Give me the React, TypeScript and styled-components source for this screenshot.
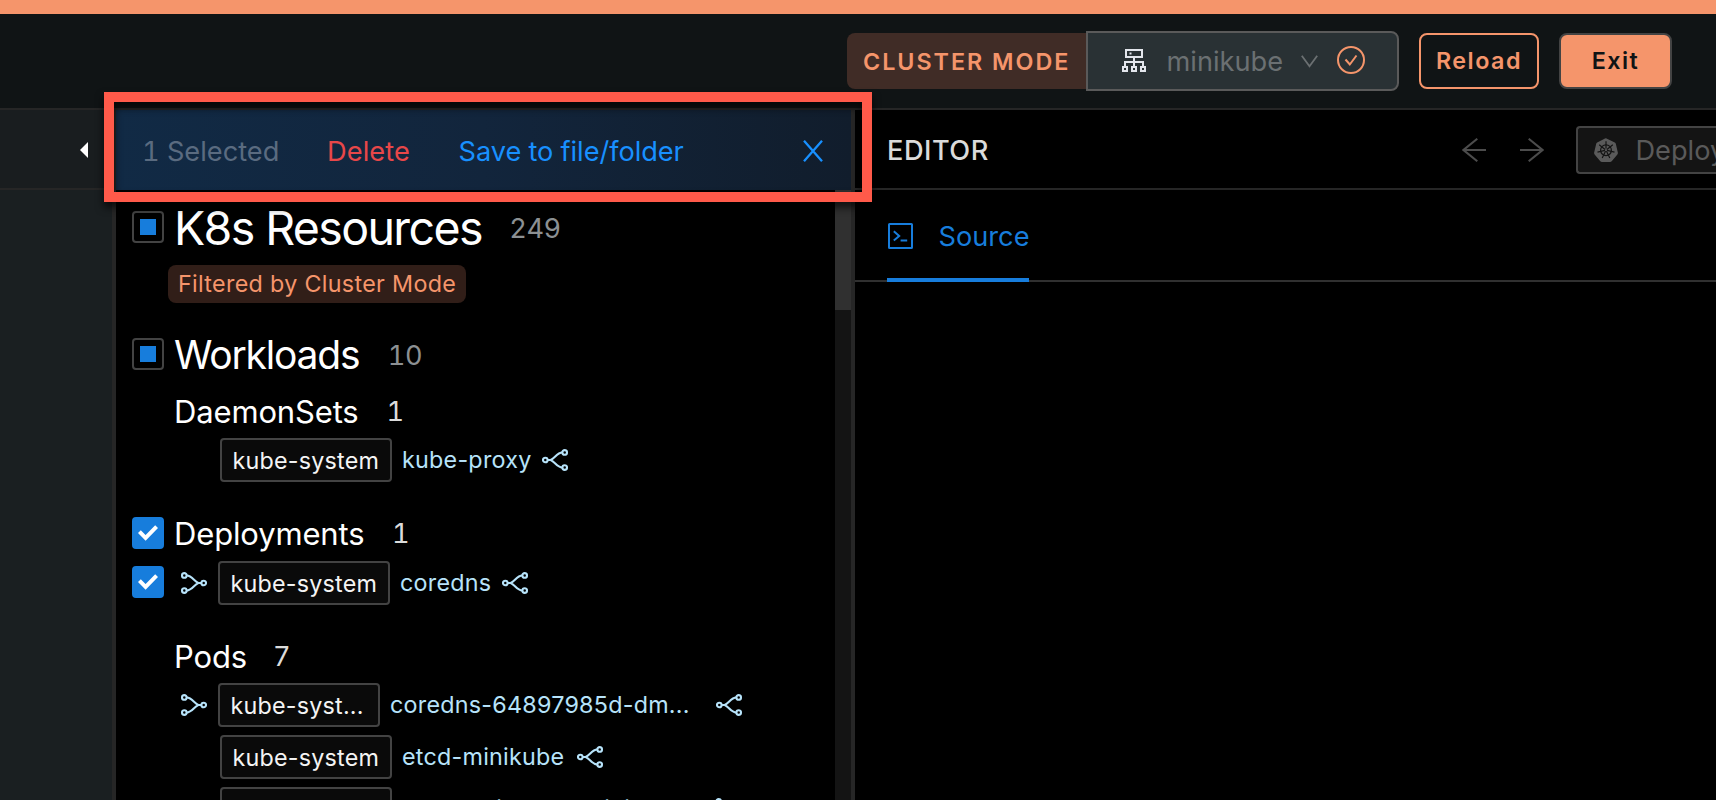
import React from "react";
import styled, { createGlobalStyle } from "styled-components";

const Global = createGlobalStyle`
  *, *::before, *::after { box-sizing: border-box; }
  html, body { margin: 0; background: #000; overflow: hidden; }
  body {
    font-family: Inter, "Liberation Sans", sans-serif;
    font-size: 27.2px;
    color: #dbdbdb;
  }
  svg { flex: none; }
`;

const Page = styled.div`
  position: relative;
  display: flex;
  flex-direction: column;
  width: 1716px;
  height: 800px;
  overflow: hidden;
  background: #000;
`;

const Accent = styled.div`
  flex: none;
  height: 14px;
  background: #f5956b;
`;

const Header = styled.header`
  flex: none;
  display: flex;
  align-items: center;
  justify-content: flex-end;
  height: 96px;
  padding-right: 44px;
  background: #101415;
  border-bottom: 2px solid #262626;
`;

const ModeLabel = styled.div`
  width: 239px;
  height: 56px;
  padding-left: 16px;
  border-radius: 8px 0 0 8px;
  background: #402c26;
  color: #f5956b;
  font-size: 23.3px;
  font-weight: 600;
  line-height: 57px;
  letter-spacing: 1.98px;
  white-space: nowrap;
`;

const ClusterSelect = styled.div`
  display: flex;
  align-items: center;
  width: 313px;
  height: 60px;
  padding-left: 34px;
  border: 2px solid #5a5a5a;
  border-radius: 0 8px 8px 0;
  background: #293134;
  color: #6b7072;
`;

const ClusterName = styled.span`
  margin: 1px 0 0 20.5px;
  width: 134.5px;
  line-height: 56px;
`;

const StatusIcon = styled.span`
  display: flex;
  margin: -2px 0 0 19px;
`;

const Button = styled.button<{ $solid?: boolean; $width: number; $gap: number }>`
  width: ${(p) => p.$width}px;
  height: 56px;
  margin-left: ${(p) => p.$gap}px;
  padding: 0;
  border: 2px solid ${(p) => (p.$solid ? "#434343" : "#f5956b")};
  border-radius: 8px;
  background: ${(p) => (p.$solid ? "#f5956b" : "#101415")};
  color: ${(p) => (p.$solid ? "#101415" : "#f5956b")};
  font: 600 23.3px/52px Inter, sans-serif;
  letter-spacing: 1.5px;
  padding-bottom: ${(p) => (p.$solid ? 0 : 2)}px;
`;

const Body = styled.div`
  flex: 1;
  display: flex;
  min-height: 0;
`;

const Sidebar = styled.aside`
  width: 116px;
  background: #1a1f21;
  border-right: 4px solid #262626;
`;

const SidebarHead = styled.div`
  display: flex;
  align-items: center;
  justify-content: flex-end;
  height: 80px;
  padding: 2px 24px 0 0;
  background: #191d1f;
  border-bottom: 2px solid #262626;
`;

const Navigator = styled.section`
  display: flex;
  flex-direction: column;
  width: 739px;
  border-right: 4px solid #262626;
`;

const SelectionBar = styled.div`
  flex: none;
  display: flex;
  align-items: center;
  height: 80px;
  padding: 3px 28px 0 26px;
  background: linear-gradient(90deg, #112a45 0%, #12253c 50%, #111d2c 100%);
  line-height: 36px;
  white-space: nowrap;
`;

const BarText = styled.span<{ $color: string; $width?: number; $spacing?: number }>`
  color: ${(p) => p.$color};
  width: ${(p) => (p.$width ? `${p.$width}px` : "auto")};
  letter-spacing: ${(p) => p.$spacing ?? 0}px;
  font-variant-numeric: tabular-nums;
`;

const CloseSlot = styled.span`
  display: flex;
  margin: -2px 0 0 auto;
`;

const TreeArea = styled.div`
  flex: 1;
  display: flex;
  min-height: 0;
`;

const Tree = styled.div`
  flex: 1;
  min-width: 0;
  padding-left: 16px;
  overflow: hidden;
`;

const Scrollbar = styled.div`
  width: 16px;
  background: #141414;
`;

const Thumb = styled.div`
  height: 120px;
  background: #303030;
`;

const Row = styled.div<{ $top: number; $height: number }>`
  display: flex;
  align-items: center;
  height: ${(p) => p.$height}px;
  margin-top: ${(p) => p.$top}px;
  white-space: nowrap;
`;

const CheckSlot = styled.span<{ $raise?: boolean }>`
  flex: none;
  width: 42px;
  height: 32px;
  margin-top: ${(p) => (p.$raise ? -2 : 0)}px;
`;

const Box = styled.span<{ $full?: boolean }>`
  display: flex;
  align-items: center;
  justify-content: center;
  width: 32px;
  height: 32px;
  border: 2px solid ${(p) => (p.$full ? "#177ddc" : "#434343")};
  border-radius: 4px;
  background: ${(p) => (p.$full ? "#177ddc" : "transparent")};
`;

const PartialMark = styled.span`
  width: 16px;
  height: 16px;
  background: #177ddc;
`;

const Title = styled.span<{ $size: number; $spacing?: number; $y?: number }>`
  color: #fff;
  font-size: ${(p) => p.$size}px;
  line-height: 1;
  letter-spacing: ${(p) => p.$spacing ?? -0.15}px;
  margin-top: ${(p) => p.$y ?? 0}px;
`;

const Count = styled.span<{ $bright?: boolean; $gap: number; $y?: number }>`
  margin-left: ${(p) => p.$gap}px;
  margin-top: ${(p) => p.$y ?? 0}px;
  color: ${(p) => (p.$bright ? "#dbdbdb" : "#8c9093")};
  font-variant-numeric: tabular-nums;
  line-height: 32px;
  letter-spacing: -0.5px;
`;

const FilterTag = styled.div`
  width: 298px;
  height: 38px;
  margin: 16px 0 0 36px;
  padding-left: 10px;
  border-radius: 8px;
  background: #311e18;
  color: #f5956b;
  font-size: 23.3px;
  line-height: 37px;
  letter-spacing: 0.32px;
  white-space: nowrap;
`;

const RefSlot = styled.span<{ $width: number }>`
  display: flex;
  flex: none;
  width: ${(p) => p.$width}px;
  padding-left: 7px;
`;

const Namespace = styled.span<{ $width: number }>`
  flex: none;
  width: ${(p) => p.$width}px;
  height: 44px;
  padding-left: 10.5px;
  border: 2px solid #434343;
  border-radius: 4px;
  background: #0a0a0a;
  color: #f4f4f4;
  font-size: 23.3px;
  line-height: 42px;
  letter-spacing: 0.22px;
`;

const ResourceName = styled.span<{ $width: number }>`
  flex: none;
  width: ${(p) => p.$width - 1}px;
  margin-top: -1px;
  margin-left: 10px;
  color: #b7e3fa;
  font-size: 23.3px;
  line-height: 40px;
  letter-spacing: 0.25px;
`;

const Editor = styled.main`
  flex: 1;
  min-width: 0;
  background: #000;
`;

const EditorHead = styled.div`
  display: flex;
  align-items: center;
  height: 80px;
  padding-left: 32px;
  border-bottom: 2px solid #262626;
  overflow: hidden;
`;

const EditorTitle = styled.h1`
  margin: 3px auto 0 0;
  color: #dbdbdb;
  font-size: 27.2px;
  font-weight: 500;
  line-height: 34px;
  letter-spacing: 0.5px;
`;

const Arrows = styled.div`
  display: flex;
  gap: 34px;
  margin: 2px 32px 0 0;
`;

const KindSelect = styled.div`
  flex: none;
  display: flex;
  align-items: center;
  width: 140px;
  height: 48px;
  margin-top: 2px;
  padding-left: 16px;
  border: 2px solid #434343;
  border-right: 0;
  border-radius: 4px 0 0 4px;
  background: #141414;
  color: #5a5a5a;
  line-height: 44px;
  white-space: nowrap;
  overflow: hidden;
`;

const KindLabel = styled.span`
  margin: 1px 0 0 17.5px;
`;

const Tabs = styled.div`
  display: flex;
  height: 92px;
  padding-left: 32px;
  border-bottom: 2px solid #303030;
`;

const Tab = styled.div`
  display: flex;
  align-items: center;
  width: 142px;
  height: 92px;
  padding: 4px 0 0 1px;
  border-bottom: 4px solid #177ddc;
  color: #177ddc;
`;

const TabLabel = styled.span`
  margin: 1px 0 0 25.5px;
  line-height: 34px;
`;

const Frame = styled.div`
  position: absolute;
  left: 104px;
  top: 92px;
  width: 768px;
  height: 110px;
  border: 10px solid #ff5a4a;
  filter: drop-shadow(0 5px 4px rgba(0, 0, 0, 0.75));
`;

const ShareIcon = ({ flip }: { flip?: boolean }) => (
  <svg width="26" height="22" viewBox="0 0 26 22" fill="none" stroke="#b7e3fa" strokeWidth="2.1">
    <g transform={flip ? "matrix(-1 0 0 1 26 0)" : undefined}>
      <circle cx="3.3" cy="11" r="2.3" />
      <circle cx="22.7" cy="3.4" r="2.3" />
      <circle cx="22.7" cy="18.6" r="2.3" />
      <path d="M5.6 11H8.6C12.5 9.5 15 3.8 20.4 3.4M8.6 11C12.5 12.5 15 18.2 20.4 18.6" />
    </g>
  </svg>
);

const ClusterIcon = () => (
  <svg width="24" height="24" viewBox="0 0 24 24" fill="none" stroke="#e3e6ec" strokeWidth="2">
    <path d="M4 1H20V8H4ZM12 8V17M3 17V13H21V17" />
    <path d="M1 18H5V22H1ZM10 18H14V22H10ZM19 18H23V22H19Z" />
    <path d="M7.5 4.5H9.5" />
  </svg>
);

const ChevronIcon = () => (
  <svg width="17" height="13" viewBox="0 0 17 13" fill="none" stroke="#6b7072" strokeWidth="1.8">
    <path d="M.8 .8L8.5 11.2L16.2 .8" />
  </svg>
);

const OkIcon = () => (
  <svg width="28" height="28" viewBox="0 0 28 28" fill="none" stroke="#f5956b" strokeWidth="2">
    <circle cx="14" cy="14" r="13" />
    <path d="M8.5 13.5L12.8 18.5L19.5 9.5" />
  </svg>
);

const CloseIcon = () => (
  <svg width="20" height="22" viewBox="0 0 20 22" fill="none" stroke="#1890ff" strokeWidth="2.3">
    <path d="M1 .8L19 21.2M19 .8L1 21.2" />
  </svg>
);

const ArrowIcon = ({ right }: { right?: boolean }) => (
  <svg width="24" height="24" viewBox="0 0 24 24" fill="none" stroke="#4c4c4c" strokeWidth="2.1">
    <path
      transform={right ? "matrix(-1 0 0 1 24 0)" : undefined}
      d="M24 12H1.5M15.3 .8L1.5 12L15.3 23.2"
    />
  </svg>
);

const HelmIcon = () => (
  <svg width="24" height="24" viewBox="0 0 24 24">
    <path
      fill="#5a5a5a"
      d="M12 .2L20.8 4.4Q21.6 4.8 21.8 5.7L23.9 14.7Q24 15.6 23.4 16.4L17.7 23.3Q17 24 16.1 24H7.9Q7 24 6.3 23.3L.6 16.4Q0 15.6.1 14.7L2.2 5.7Q2.4 4.8 3.2 4.4L11 .4Q11.5 .1 12 .2Z"
    />
    <g fill="none" stroke="#141414" strokeWidth="1.2">
      <circle cx="12" cy="12.2" r="5.4" />
      <path d="M12 3.2V10.6M12 12.2L18.8 6.8M12 12.2L20.5 14.1M12 12.2L15.8 20M12 12.2L8.2 20M12 12.2L3.5 14.1M12 12.2L5.2 6.8" />
    </g>
    <circle cx="12" cy="12.2" r="1.1" fill="#5a5a5a" />
  </svg>
);

const SourceIcon = () => (
  <svg width="25" height="26" viewBox="0 0 25 26" fill="none" stroke="#177ddc" strokeWidth="2">
    <rect x="1" y="1" width="23" height="24" rx=".6" />
    <path d="M5.8 8.2L11.2 13L5.8 17.6M12.6 17.4H19.2" />
  </svg>
);

const Check = ({ state, raise }: { state?: "partial" | "full"; raise?: boolean }) => (
  <CheckSlot $raise={raise}>
    {state && (
      <Box $full={state === "full"}>
        {state === "partial" ? (
          <PartialMark />
        ) : (
          <svg width="20" height="16" viewBox="0 0 20 16" fill="none" stroke="#fff" strokeWidth="4">
            <path d="M1.4 6.6L7.6 12.8L18.6 1.6" />
          </svg>
        )}
      </Box>
    )}
  </CheckSlot>
);

type ResourceProps = {
  top: number;
  checked?: boolean;
  incoming?: boolean;
  namespace: string;
  nsWidth?: number;
  name: string;
  nameWidth: number;
};

const Resource = ({ top, checked, incoming, namespace, nsWidth = 172, name, nameWidth }: ResourceProps) => (
  <Row $top={top} $height={44}>
    <Check state={checked ? "full" : undefined} raise />
    <RefSlot $width={incoming ? 44 : 46}>{incoming && <ShareIcon flip />}</RefSlot>
    <Namespace $width={nsWidth}>{namespace}</Namespace>
    <ResourceName $width={nameWidth}>{name}</ResourceName>
    <ShareIcon />
  </Row>
);

export default function App() {
  return (
    <Page>
      <Global />
      <Accent />
      <Header>
        <ModeLabel>CLUSTER MODE</ModeLabel>
        <ClusterSelect>
          <ClusterIcon />
          <ClusterName>minikube</ClusterName>
          <ChevronIcon />
          <StatusIcon>
            <OkIcon />
          </StatusIcon>
        </ClusterSelect>
        <Button $width={120} $gap={20}>Reload</Button>
        <Button $width={113} $gap={20} $solid>Exit</Button>
      </Header>
      <Body>
        <Sidebar>
          <SidebarHead>
            <svg width="8" height="16" viewBox="0 0 8 16">
              <path d="M8 0V16L0 8Z" fill="#fff" />
            </svg>
          </SidebarHead>
        </Sidebar>
        <Navigator>
          <SelectionBar>
            <BarText $color="#5a6b80" $width={185}>1 Selected</BarText>
            <BarText $color="#e84749" $width={131.5} $spacing={0.1}>Delete</BarText>
            <BarText $color="#1890ff" $spacing={-0.05}>Save to file/folder</BarText>
            <CloseSlot>
              <CloseIcon />
            </CloseSlot>
          </SelectionBar>
          <TreeArea>
            <Tree>
              <Row $top={15} $height={44}>
                <Check state="partial" />
                <Title $size={46.5} $spacing={-1.62} $y={2}>K8s Resources</Title>
                <Count $gap={27.5} $y={3}>249</Count>
              </Row>
              <FilterTag>Filtered by Cluster Mode</FilterTag>
              <Row $top={29} $height={44}>
                <Check state="partial" />
                <Title $size={39} $spacing={-1.2} $y={1}>Workloads</Title>
                <Count $gap={28.5} $y={3}>10</Count>
              </Row>
              <Row $top={16} $height={40}>
                <Check />
                <Title $size={31} $y={-1}>DaemonSets</Title>
                <Count $bright $gap={28}>1</Count>
              </Row>
              <Resource top={6} namespace="kube-system" name="kube-proxy" nameWidth={141} />
              <Row $top={31} $height={40}>
                <Check state="full" />
                <Title $size={31} $y={1}>Deployments</Title>
                <Count $bright $gap={27.5} $y={1}>1</Count>
              </Row>
              <Resource top={8} checked incoming namespace="kube-system" name="coredns" nameWidth={103} />
              <Row $top={31} $height={40}>
                <Check />
                <Title $size={31} $y={1}>Pods</Title>
                <Count $bright $gap={26} $y={1}>7</Count>
              </Row>
              <Resource top={7} incoming namespace="kube-syst..." nsWidth={162} name="coredns-64897985d-dm..." nameWidth={327} />
              <Resource top={8} namespace="kube-system" name="etcd-minikube" nameWidth={176} />
              <Resource top={8} namespace="kube-system" name="kube-apiserver-minikube" nameWidth={295} />
            </Tree>
            <Scrollbar>
              <Thumb />
            </Scrollbar>
          </TreeArea>
        </Navigator>
        <Editor>
          <EditorHead>
            <EditorTitle>EDITOR</EditorTitle>
            <Arrows>
              <ArrowIcon />
              <ArrowIcon right />
            </Arrows>
            <KindSelect>
              <HelmIcon />
              <KindLabel>Deployment</KindLabel>
            </KindSelect>
          </EditorHead>
          <Tabs>
            <Tab>
              <SourceIcon />
              <TabLabel>Source</TabLabel>
            </Tab>
          </Tabs>
        </Editor>
      </Body>
      <Frame />
    </Page>
  );
}
